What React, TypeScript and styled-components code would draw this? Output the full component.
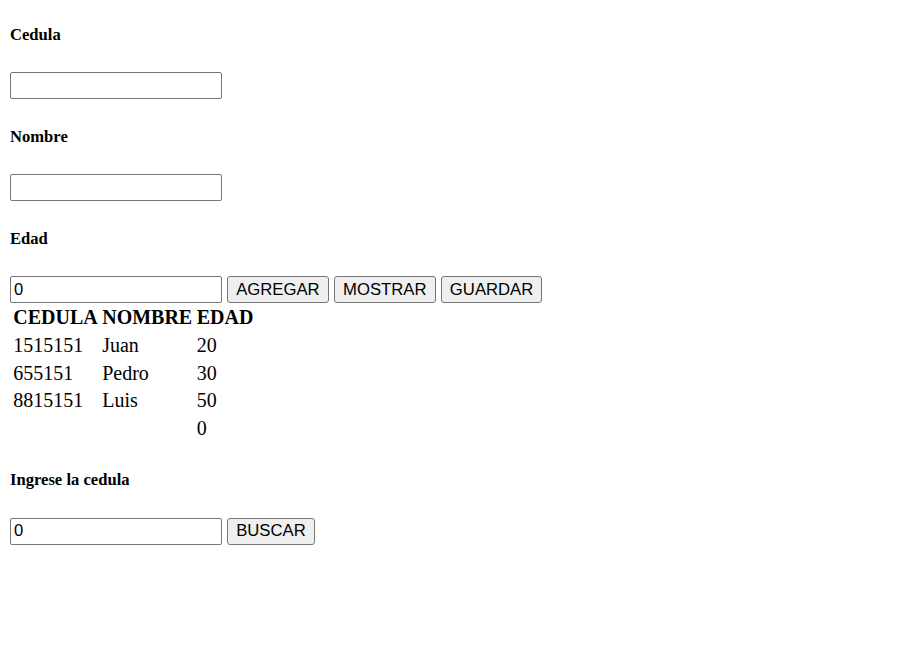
import React from "react";
import styled, { createGlobalStyle } from "styled-components";

const GlobalStyle = createGlobalStyle`
  html, body {
    margin: 0;
    padding: 0;
    background: #ffffff;
    color: #000000;
    font-family: "Liberation Serif", "Times New Roman", serif;
  }
`;

const Page = styled.div`
  padding: 25px 10px 0 10px;
`;

const Label = styled.h5<{ top?: number; bottom?: number }>`
  margin: ${(props) => props.top ?? 0}px 0 ${(props) => props.bottom ?? 27}px 0;
  font-size: 16.6px;
  line-height: 20px;
  height: 20px;
  font-weight: bold;
`;

const Row = styled.div<{ bottom?: number }>`
  display: flex;
  align-items: center;
  gap: 5px;
  margin-bottom: ${(props) => props.bottom ?? 0}px;
`;

const Input = styled.input`
  box-sizing: border-box;
  width: 212px;
  height: 27px;
  margin: 0;
  padding: 0 3px;
  border: 1px solid #767676;
  border-radius: 2px;
  font-family: "Liberation Sans", Arial, sans-serif;
  font-size: 16.6px;
  color: #000000;
  background: #ffffff;
  outline: none;
`;

const Button = styled.button`
  box-sizing: border-box;
  height: 27px;
  margin: 0;
  padding: 0 8.2px;
  border: 1px solid #767676;
  border-radius: 3px;
  background: #efefef;
  font-family: "Liberation Sans", Arial, sans-serif;
  font-size: 16.7px;
  color: #000000;
`;

const Table = styled.table`
  border-collapse: separate;
  border-spacing: 2.5px;
  font-size: 20px;
  line-height: 23.2px;
  margin: 0;
`;

const Head = styled.th`
  padding: 1.25px;
  text-align: left;
  font-weight: bold;
`;

const Cell = styled.td`
  padding: 1.25px;
`;

const personas = [
  { cedula: "1515151", nombre: "Juan", edad: "20" },
  { cedula: "655151", nombre: "Pedro", edad: "30" },
  { cedula: "8815151", nombre: "Luis", edad: "50" },
  { cedula: "", nombre: "", edad: "0" },
];

export default function App() {
  return (
    <>
      <GlobalStyle />
      <Page>
        <Label>Cedula</Label>
        <Row bottom={28}>
          <Input type="text" defaultValue="" />
        </Row>
        <Label>Nombre</Label>
        <Row bottom={28}>
          <Input type="text" defaultValue="" />
        </Row>
        <Label>Edad</Label>
        <Row>
          <Input type="text" defaultValue="0" />
          <Button>AGREGAR</Button>
          <Button>MOSTRAR</Button>
          <Button>GUARDAR</Button>
        </Row>
        <Table>
          <thead>
            <tr>
              <Head>CEDULA</Head>
              <Head>NOMBRE</Head>
              <Head>EDAD</Head>
            </tr>
          </thead>
          <tbody>
            {personas.map((p, i) => (
              <tr key={i}>
                <Cell>{p.cedula}</Cell>
                <Cell>{p.nombre}</Cell>
                <Cell>{p.edad}</Cell>
              </tr>
            ))}
          </tbody>
        </Table>
        <Label top={26} bottom={28}>Ingrese la cedula</Label>
        <Row>
          <Input type="text" defaultValue="0" />
          <Button>BUSCAR</Button>
        </Row>
      </Page>
    </>
  );
}
